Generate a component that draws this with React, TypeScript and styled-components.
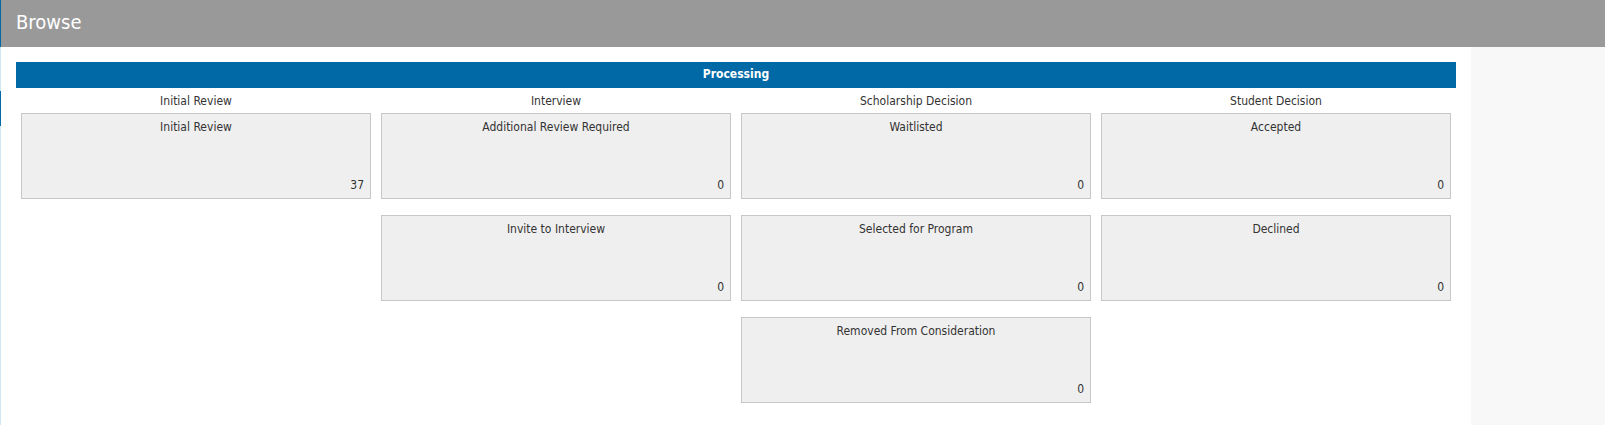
import { createGlobalStyle, styled } from "styled-components";

type Stage = {
  title: string;
  cards: { name: string; count: number }[];
};

const stages: Stage[] = [
  { title: "Initial Review", cards: [{ name: "Initial Review", count: 37 }] },
  {
    title: "Interview",
    cards: [
      { name: "Additional Review Required", count: 0 },
      { name: "Invite to Interview", count: 0 },
    ],
  },
  {
    title: "Scholarship Decision",
    cards: [
      { name: "Waitlisted", count: 0 },
      { name: "Selected for Program", count: 0 },
      { name: "Removed From Consideration", count: 0 },
    ],
  },
  {
    title: "Student Decision",
    cards: [
      { name: "Accepted", count: 0 },
      { name: "Declined", count: 0 },
    ],
  },
];

export default function App(): JSX.Element {
  return (
    <>
      <GlobalStyle />
      <Page>
        <Rail>
          <RailTop />
          <RailGap />
          <RailMarker />
        </Rail>
        <Main>
          <Header>Browse</Header>
          <Body>
            <Content>
              <GroupBar>Processing</GroupBar>
              <Columns>
                {stages.map((stage) => (
                  <Column key={stage.title}>
                    <ColumnTitle>{stage.title}</ColumnTitle>
                    {stage.cards.map((card) => (
                      <Card key={card.name}>
                        <CardName>{card.name}</CardName>
                        <CardCount>{card.count}</CardCount>
                      </Card>
                    ))}
                  </Column>
                ))}
              </Columns>
            </Content>
            <SidePanel />
          </Body>
        </Main>
      </Page>
    </>
  );
}

const GlobalStyle = createGlobalStyle`
  html, body {
    margin: 0;
    padding: 0;
    background: #ffffff;
  }
  body {
    font-family: "DejaVu Sans Condensed", "DejaVu Sans", "Liberation Sans", sans-serif;
    font-stretch: condensed;
    color: #333333;
  }
`;

const Page = styled.div`
  display: flex;
  height: 425px;
  overflow: hidden;
`;

const Rail = styled.div`
  width: 1px;
  flex: none;
  display: flex;
  flex-direction: column;
  background: #d2e6f1;
`;

const RailTop = styled.div`
  height: 47px;
  background: #0069a6;
`;

const RailGap = styled.div`
  height: 44px;
`;

const RailMarker = styled.div`
  height: 35px;
  background: #0069a6;
`;

const Main = styled.div`
  flex: 1;
  display: flex;
  flex-direction: column;
`;

const Header = styled.div`
  height: 47px;
  background: #999999;
  color: #ffffff;
  font-size: 20px;
  line-height: 44px;
  padding-left: 15px;
`;

const Body = styled.div`
  flex: 1;
  display: flex;
`;

const Content = styled.div`
  width: 1470px;
  flex: none;
  padding: 15px 0 0 15px;
  box-sizing: border-box;
  background: #ffffff;
`;

const SidePanel = styled.div`
  flex: 1;
  background: #f8f8f8;
`;

const GroupBar = styled.div`
  width: 1440px;
  height: 26px;
  background: #0069a6;
  color: #ffffff;
  font-weight: bold;
  font-size: 12px;
  line-height: 25px;
  text-align: center;
`;

const Columns = styled.div`
  display: grid;
  grid-template-columns: repeat(4, 360px);
`;

const Column = styled.div`
  display: flex;
  flex-direction: column;
  align-items: center;
  gap: 16px;
`;

const ColumnTitle = styled.div`
  height: 25px;
  margin-bottom: -16px;
  font-size: 12px;
  line-height: 26px;
  text-align: center;
`;

const Card = styled.div`
  width: 350px;
  height: 86px;
  box-sizing: border-box;
  border: 1px solid #c8c8c8;
  background: #efefef;
  display: flex;
  flex-direction: column;
  justify-content: space-between;
  padding: 5px 6px 5px 6px;
  font-size: 12px;
`;

const CardName = styled.div`
  text-align: center;
  line-height: 16px;
`;

const CardCount = styled.div`
  text-align: right;
  line-height: 16px;
`;
